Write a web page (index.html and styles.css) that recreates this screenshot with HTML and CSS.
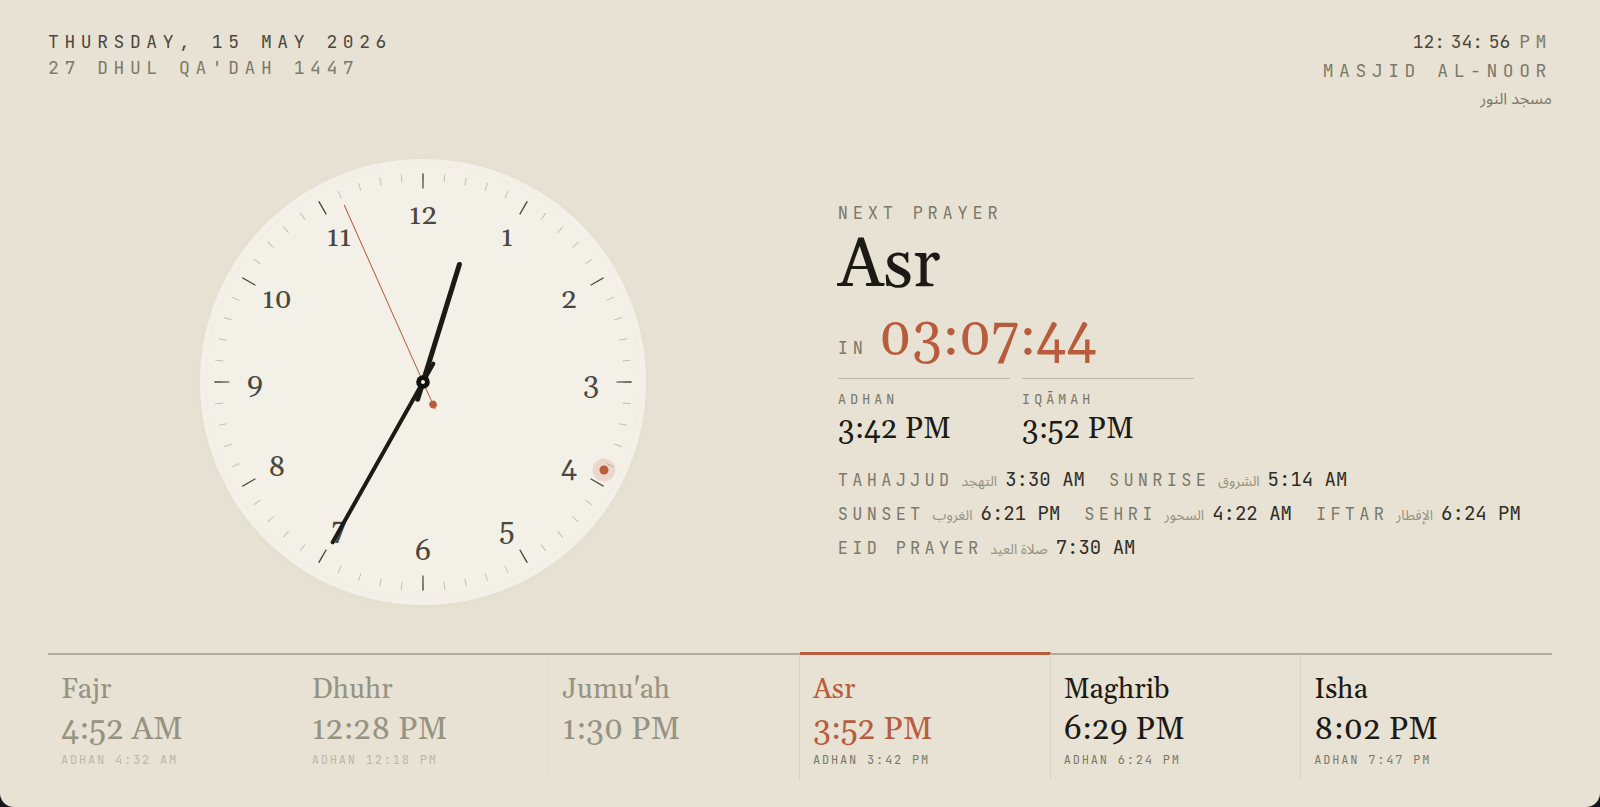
FILE: index.html
```html
<!DOCTYPE html>
<html lang="en">
<head>
<meta charset="utf-8">
<meta name="viewport" content="width=device-width, initial-scale=1">
<title>Masjid Al-Noor prayer times</title>
<link rel="stylesheet" href="styles.css">
</head>
<body>
<div class="board">
  <header class="top">
    <div class="dates">
      <div class="date">THURSDAY, 15 MAY 2026</div>
      <div class="hijri">27 DHUL QA'DAH 1447</div>
    </div>
    <div class="place">
      <div class="now"><span class="digits">12</span><span>:</span><span class="digits">34</span><span>:</span><span class="digits">56</span><span class="period">PM</span></div>
      <div class="masjid">MASJID AL-NOOR</div>
      <div class="masjid-ar" lang="ar" dir="rtl">مسجد النور</div>
    </div>
  </header>

  <main class="main">
    <div class="clock-area">
      <svg class="clock" viewBox="-224 -224 448 448" role="img" aria-label="Analogue clock">
        <circle class="face" r="223"/>
        <circle class="inner-ring" r="217"/>
        <circle class="minute-ticks" r="205" pathLength="6000"/>
        <circle class="hour-ticks" r="201" pathLength="12000"/>
        <g class="numerals">
          <text x="0" y="-158">12</text>
          <text x="84" y="-136">1</text>
          <text x="146" y="-74">2</text>
          <text x="168" y="10">3</text>
          <text x="146" y="94">4</text>
          <text x="84" y="156">5</text>
          <text x="0" y="178">6</text>
          <text x="-84" y="156">7</text>
          <text x="-146" y="94">8</text>
          <text x="-168" y="10">9</text>
          <text x="-146" y="-74">10</text>
          <text x="-84" y="-136">11</text>
        </g>
        <circle class="halo" cx="181" cy="88" r="11.4"/>
        <circle class="accent-dot" cx="181" cy="88" r="4.5"/>
        <line class="hour-hand" y1="18" y2="-123" transform="rotate(17.2)"/>
        <line class="minute-hand" y1="21" y2="-184" transform="rotate(209.4)"/>
        <g transform="rotate(-24)">
          <line class="second-hand" y1="30" y2="-194"/>
          <circle class="accent-dot" cy="24.7" r="3.8"/>
        </g>
        <circle class="hub" r="6.8"/>
        <circle class="hub-hole" r="2"/>
      </svg>
    </div>

    <section class="next">
      <div class="label">NEXT PRAYER</div>
      <h1 class="next-name">Asr</h1>
      <div class="countdown"><span class="label">IN</span><span class="remaining">03:07:44</span></div>
      <div class="pair">
        <div class="pair-item"><div class="small-label">ADHAN</div><div class="pair-time">3:42 PM</div></div>
        <div class="pair-item"><div class="small-label">IQĀMAH</div><div class="pair-time">3:52 PM</div></div>
      </div>
      <div class="extras">
        <div class="extra"><span class="extra-name">TAHAJJUD</span><span class="extra-ar" lang="ar">التهجد</span><span class="extra-time">3:30 AM</span></div>
        <div class="extra"><span class="extra-name">SUNRISE</span><span class="extra-ar" lang="ar">الشروق</span><span class="extra-time">5:14 AM</span></div>
        <div class="extra"><span class="extra-name">SUNSET</span><span class="extra-ar" lang="ar">الغروب</span><span class="extra-time">6:21 PM</span></div>
        <div class="extra"><span class="extra-name">SEHRI</span><span class="extra-ar" lang="ar">السحور</span><span class="extra-time">4:22 AM</span></div>
        <div class="extra"><span class="extra-name">IFTAR</span><span class="extra-ar" lang="ar">الإفطار</span><span class="extra-time">6:24 PM</span></div>
        <div class="extra"><span class="extra-name">EID PRAYER</span><span class="extra-ar" lang="ar">صلاة العيد</span><span class="extra-time">7:30 AM</span></div>
      </div>
    </section>
  </main>

  <footer class="prayers">
    <div class="prayer past"><div class="prayer-name">Fajr</div><div class="prayer-time">4:52 AM</div><div class="prayer-adhan">ADHAN 4:32 AM</div></div>
    <div class="prayer past"><div class="prayer-name">Dhuhr</div><div class="prayer-time">12:28 PM</div><div class="prayer-adhan">ADHAN 12:18 PM</div></div>
    <div class="prayer past"><div class="prayer-name">Jumu'ah</div><div class="prayer-time">1:30 PM</div></div>
    <div class="prayer current"><div class="prayer-name">Asr</div><div class="prayer-time">3:52 PM</div><div class="prayer-adhan">ADHAN 3:42 PM</div></div>
    <div class="prayer"><div class="prayer-name">Maghrib</div><div class="prayer-time">6:29 PM</div><div class="prayer-adhan">ADHAN 6:24 PM</div></div>
    <div class="prayer"><div class="prayer-name">Isha</div><div class="prayer-time">8:02 PM</div><div class="prayer-adhan">ADHAN 7:47 PM</div></div>
  </footer>
</div>
</body>
</html>
```

FILE: styles.css
```css
:root {
  --paper: #e8e2d4;
  --face: #f3f0e8;
  --ink: #1c1a14;
  --soft: #4a473c;
  --muted: #7c7969;
  --rule: #aeac9b;
  --accent: #b85c3e;
  --serif: Georgia, Gelasio, "Liberation Serif", serif;
  --mono: "JetBrains Mono", "Liberation Mono", monospace;
  --arabic: "Noto Sans Arabic", "Noto Sans", "DejaVu Sans", sans-serif;
}

* { box-sizing: border-box; }

body {
  margin: 0;
  background: #16161c;
  color: var(--ink);
  font-family: var(--mono);
}

.board {
  display: flex;
  flex-direction: column;
  min-height: 100vh;
  padding: 29px 48px 27px;
  background: var(--paper);
  border-radius: 0 0 14px 14px;
}

.top {
  display: flex;
  justify-content: space-between;
  font-size: 18px;
  line-height: 26px;
  letter-spacing: 0.31em;
  color: var(--muted);
}

.date { color: var(--soft); }

.place { text-align: right; }

.now { color: var(--soft); }

.digits { letter-spacing: 0; }

.period {
  margin-left: 9px;
  color: var(--muted);
}

.masjid { line-height: 32px; }

.masjid-ar {
  font-family: var(--arabic);
  font-size: 16px;
  line-height: 24px;
  letter-spacing: 0;
  text-align: start;
}

.main {
  flex: 1;
  display: grid;
  grid-template-columns: 1.05fr 1fr;
  gap: 40px;
  align-items: center;
}

.clock-area {
  display: flex;
  justify-content: center;
}

.clock {
  width: min(100%, 28vw);
  overflow: visible;
}

.face {
  fill: var(--face);
  filter: drop-shadow(0 2px 8px rgba(210, 218, 195, 0.3));
}

.inner-ring {
  fill: none;
  stroke: #efede4;
  stroke-width: 1;
}

.minute-ticks {
  fill: none;
  stroke: #bdbaae;
  stroke-width: 8;
  stroke-dasharray: 4 96;
  stroke-dashoffset: 2;
}

.hour-ticks {
  fill: none;
  stroke: var(--soft);
  stroke-width: 15;
  stroke-dasharray: 12 988;
  stroke-dashoffset: 6;
}

.numerals {
  font-family: var(--serif);
  font-size: 29px;
  text-anchor: middle;
  fill: var(--soft);
}

.halo {
  fill: var(--accent);
  opacity: 0.16;
}

.accent-dot { fill: var(--accent); }

.hour-hand,
.minute-hand {
  stroke: var(--ink);
  stroke-linecap: round;
}

.hour-hand { stroke-width: 5; }

.minute-hand { stroke-width: 4; }

.second-hand {
  stroke: var(--accent);
  stroke-width: 1;
}

.hub { fill: #12110d; }

.hub-hole { fill: var(--face); }

.label {
  font-size: 17px;
  line-height: 24px;
  letter-spacing: 0.28em;
  color: var(--muted);
}

.next-name {
  margin: 4px 0 0;
  font-family: var(--serif);
  font-size: 68px;
  font-weight: 400;
  line-height: 74px;
}

.countdown {
  display: flex;
  align-items: baseline;
  gap: 11px;
  margin-top: 1px;
}

.remaining {
  font-family: var(--serif);
  font-size: 54px;
  line-height: 68px;
  color: var(--accent);
}

.pair {
  display: grid;
  grid-template-columns: 172px 172px;
  gap: 12px;
  margin-top: 6px;
}

.pair-item {
  border-top: 1px solid #b9bba9;
  padding-top: 10px;
}

.small-label {
  font-size: 14px;
  line-height: 20px;
  letter-spacing: 0.26em;
  color: var(--muted);
}

.pair-time {
  font-family: var(--serif);
  font-size: 30px;
  line-height: 40px;
}

.extras {
  display: flex;
  flex-wrap: wrap;
  gap: 6px 24px;
  margin-top: 18px;
}

.extra {
  display: flex;
  align-items: baseline;
  gap: 8px;
  line-height: 26px;
}

.extra-name {
  font-size: 17px;
  letter-spacing: 0.25em;
  color: var(--muted);
}

.extra-ar {
  font-family: var(--arabic);
  font-size: 14px;
  color: #96937f;
}

.extra-time {
  font-size: 19px;
  color: #2f2d24;
}

.prayers {
  display: grid;
  grid-template-columns: repeat(6, 1fr);
  border-top: 2px solid var(--rule);
}

.prayer {
  min-height: 125px;
  padding: 17px 13px 12px;
  border-right: 1px solid #d6d5c5;
}

.prayer:last-child { border-right: 0; }

.past { border-right-color: #e0dfd0; }

.past:nth-child(3) { border-right-color: #d6d5c5; }

.prayer-name {
  font-family: var(--serif);
  font-size: 28px;
  line-height: 36px;
}

.prayer-time {
  font-family: var(--serif);
  font-size: 32px;
  line-height: 44px;
}

.prayer-adhan {
  font-size: 12px;
  line-height: 16px;
  letter-spacing: 0.15em;
  color: var(--muted);
}

.past .prayer-name,
.past .prayer-time { color: #969382; }

.past .prayer-adhan { color: #bbb8a6; }

.current {
  margin-top: -3px;
  border-top: 3px solid var(--accent);
}

.current .prayer-name,
.current .prayer-time { color: var(--accent); }
```
